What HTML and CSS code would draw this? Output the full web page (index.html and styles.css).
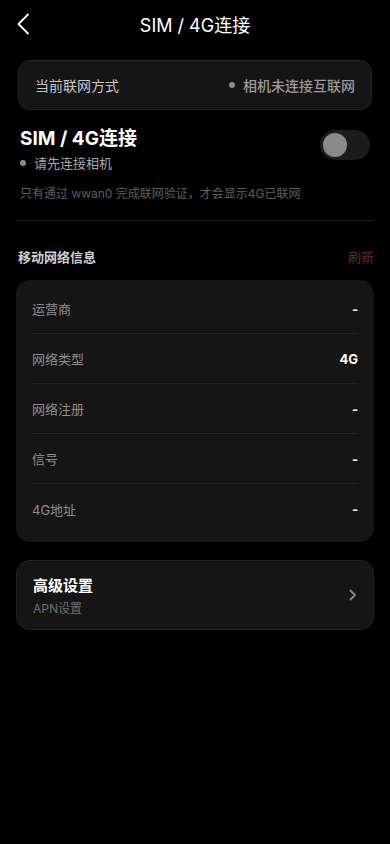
FILE: index.html
```html
<!DOCTYPE html>
<html lang="zh-CN">
<head>
  <meta charset="UTF-8">
  <meta name="viewport" content="width=device-width, initial-scale=1.0">
  <title>SIM / 4G连接</title>
  <link rel="stylesheet" href="styles.css">
</head>
<body>

  <header class="top-bar">
    <button class="back-btn" aria-label="返回">
      <svg width="14" height="22" viewBox="0 0 14 22"><path d="M12 1.5 L2.5 11 L12 20.5" fill="none" stroke="#fff" stroke-width="1.8" stroke-linecap="round" stroke-linejoin="round"/></svg>
    </button>
    <h1 class="page-title">SIM / 4G连接</h1>
  </header>

  <section class="net-card">
    <span class="net-label">当前联网方式</span>
    <span class="net-status"><i class="dot"></i>相机未连接互联网</span>
  </section>

  <section class="sim-block">
    <div class="sim-head">
      <div>
        <h2 class="sim-title">SIM / 4G连接</h2>
        <div class="sim-state"><i class="dot"></i>请先连接相机</div>
      </div>
      <div class="toggle"><div class="knob"></div></div>
    </div>
    <p class="sim-hint">只有通过 wwan0 完成联网验证，才会显示4G已联网</p>
  </section>

  <div class="section-head">
    <span class="section-title">移动网络信息</span>
    <span class="refresh">刷新</span>
  </div>

  <section class="info-card">
    <div class="info-row"><span class="info-key">运营商</span><span class="info-val">-</span></div>
    <div class="info-row"><span class="info-key">网络类型</span><span class="info-val">4G</span></div>
    <div class="info-row"><span class="info-key">网络注册</span><span class="info-val">-</span></div>
    <div class="info-row"><span class="info-key">信号</span><span class="info-val">-</span></div>
    <div class="info-row"><span class="info-key">4G地址</span><span class="info-val">-</span></div>
  </section>

  <section class="adv-card">
    <div>
      <div class="adv-title">高级设置</div>
      <div class="adv-sub">APN设置</div>
    </div>
    <svg width="8" height="12" viewBox="0 0 8 12"><path d="M1.5 1.5 L6 6 L1.5 10.5" fill="none" stroke="#8a8a8a" stroke-width="1.8" stroke-linecap="round" stroke-linejoin="round"/></svg>
  </section>

</body>
</html>
```

FILE: styles.css
```css
/* page */
body {
  margin: 0;
  padding: 0 16px;
  background: #000;
  color: #fff;
  font-family: Inter, "Noto Sans CJK SC", sans-serif;
}

/* header */
.top-bar {
  position: relative;
  height: 47px;
  display: flex;
  align-items: center;
  justify-content: center;
}

.back-btn {
  position: absolute;
  left: 0;
  top: 13px;
  padding: 0;
  background: none;
  border: 0;
  display: flex;
}

.page-title {
  margin: 0;
  font-size: 18px;
  font-weight: 400;
}

/* current network card */
.net-card {
  margin: 13px 2px 0;
  height: 48px;
  padding: 0 16px;
  display: flex;
  align-items: center;
  justify-content: space-between;
  background: #151515;
  border: 1px solid #262626;
  border-radius: 12px;
}

.net-label {
  font-size: 14px;
  color: #c8c8c8;
}

.net-status {
  display: flex;
  align-items: center;
  font-size: 14px;
  font-weight: 500;
  color: #9a9a9a;
}

.dot {
  display: inline-block;
  width: 6px;
  height: 6px;
  border-radius: 50%;
  background: #8a8a8a;
  margin-right: 8px;
}

/* sim switch */
.sim-block {
  padding: 0 4px;
  border-bottom: 1px solid #1e1e1e;
}

.sim-head {
  margin-top: 16px;
  display: flex;
  justify-content: space-between;
  align-items: flex-start;
}

.sim-title {
  margin: 0;
  font-size: 19px;
  font-weight: 700;
  line-height: 26px;
}

.sim-state {
  margin-top: 1px;
  display: flex;
  align-items: center;
  font-size: 13px;
  color: #a8a8a8;
}

.sim-state .dot {
  margin: 0 8px 0 0;
}

.toggle {
  margin-top: 4px;
  width: 50px;
  height: 30px;
  border-radius: 15px;
  background: #1c1c1c;
  display: flex;
  align-items: center;
  padding-left: 3px;
  box-sizing: border-box;
}

.knob {
  width: 24px;
  height: 24px;
  border-radius: 50%;
  background: #8a8a8a;
}

.sim-hint {
  margin: 12px 0 0;
  padding-bottom: 19px;
  font-size: 12px;
  color: #5e5e5e;
}

/* mobile info */
.section-head {
  margin-top: 26px;
  padding-left: 2px;
  display: flex;
  justify-content: space-between;
  align-items: center;
}

.section-title {
  font-size: 13px;
  font-weight: 600;
  color: #cfcfcf;
}

.refresh {
  font-size: 13px;
  color: #5e2f26;
}

.info-card {
  margin-top: 14px;
  padding: 4px 16px 8px;
  background: #151515;
  border-radius: 14px;
}

.info-row {
  height: 49px;
  display: flex;
  align-items: center;
  justify-content: space-between;
  border-bottom: 1px solid #242424;
}

.info-row:last-child {
  height: 50px;
  border-bottom: 0;
}

.info-key {
  font-size: 13px;
  color: #8e8e8e;
}

.info-val {
  font-size: 13px;
  font-weight: 700;
  color: #fff;
}

/* advanced */
.adv-card {
  margin-top: 18px;
  height: 68px;
  padding: 0 16px;
  display: flex;
  align-items: center;
  justify-content: space-between;
  background: #151515;
  border: 1px solid #242424;
  border-radius: 14px;
}

.adv-title {
  font-size: 15px;
  font-weight: 700;
}

.adv-sub {
  margin-top: 4px;
  font-size: 12px;
  color: #707070;
}
```
